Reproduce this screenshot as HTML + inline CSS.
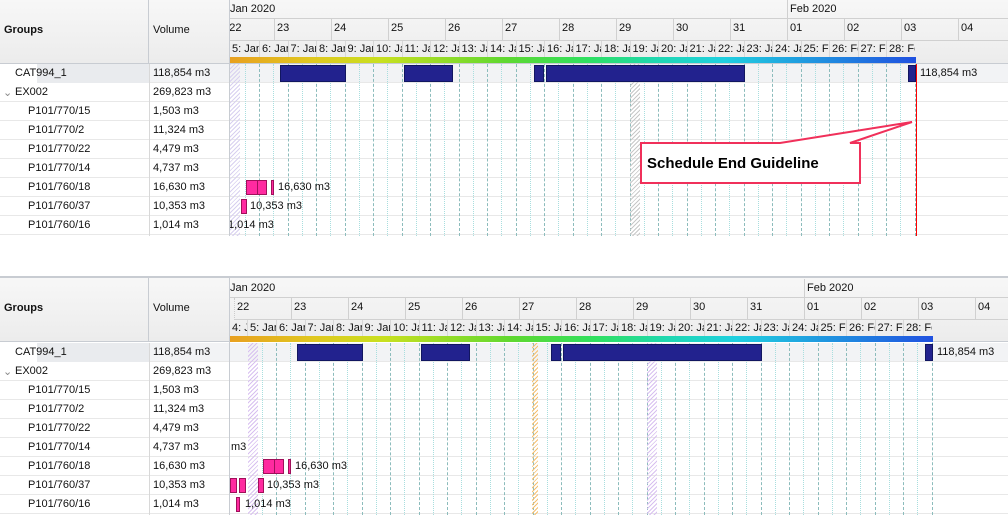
<!DOCTYPE html>
<html><head><meta charset="utf-8"><style>
*{margin:0;padding:0;box-sizing:border-box}
body{width:1008px;height:515px;background:#fff;font-family:"Liberation Sans",Tahoma,sans-serif;font-size:11px;color:#111;position:relative;overflow:hidden}
.p{position:absolute;left:0;width:1008px;height:236px;overflow:hidden}
.hdr{position:absolute;left:0;top:0;width:1008px;height:64px;background:linear-gradient(#f7f7f7,#ececec);border-bottom:1px solid #c8ccd2}
.a{position:absolute;white-space:nowrap}
.gh{position:absolute;left:0;top:0;width:149px;height:64px;border-right:1px solid #c8ccd2;font-weight:bold;padding:24px 0 0 4px}
.vh{position:absolute;left:149px;top:0;width:81px;height:64px;border-right:1px solid #c8ccd2;padding:24px 0 0 4px}
.chart{position:absolute;left:230px;top:0;width:778px;height:236px;overflow:hidden}
.mr{position:absolute;left:0;top:0;height:19px;border-bottom:1px solid #d0d0d0;width:778px}
.d{position:absolute;top:19px;height:22px;border-left:1px solid #d0d0d0;border-bottom:1px solid #d0d0d0;padding:3px 0 0 2px;width:57px}
.s{position:absolute;top:41px;height:16px;border-left:1px solid #d8d8d8;padding:2px 0 0 2px;width:28.5px;overflow:hidden;white-space:nowrap}
.cb{position:absolute;top:57px;height:6px}
.row{position:absolute;left:0;width:1008px;height:19px;border-bottom:1px solid #e8e8e8}
.row span{position:absolute;top:3px;white-space:nowrap}
.bar{position:absolute;height:17px;background:#22228e;border:1px solid #111660}
.pk{position:absolute;height:15px;background:#ff2aa0;border:1px solid #a0105a}
.lbl{position:absolute;white-space:nowrap}
.vl{position:absolute;top:64px;width:0;height:172px;border-left:1px dashed #8fc9c9}
.hl{position:absolute;top:64px;width:10px;height:172px}
</style></head><body>

<!-- TOP PANEL -->
<div class="p" style="top:0">
 <div class="hdr"></div>
 <div class="gh">Groups</div><div class="vh">Volume</div>
 <div class="row" style="top:64px;background:#f2f3f5"><div style="position:absolute;left:0;top:0;width:37px;height:19px;background:#fff"></div><div style="position:absolute;left:37px;top:0;width:112px;height:19px;background:#e9ebee"></div><span style="left:15px">CAT994_1</span><span style="left:153px">118,854 m3</span></div>
 <div class="row" style="top:83px"><span style="left:3px;color:#888">⌄</span><span style="left:15px">EX002</span><span style="left:153px">269,823 m3</span></div>
 <div class="row" style="top:102px"><span style="left:28px">P101/770/15</span><span style="left:153px">1,503 m3</span></div>
 <div class="row" style="top:121px"><span style="left:28px">P101/770/2</span><span style="left:153px">11,324 m3</span></div>
 <div class="row" style="top:140px"><span style="left:28px">P101/770/22</span><span style="left:153px">4,479 m3</span></div>
 <div class="row" style="top:159px"><span style="left:28px">P101/770/14</span><span style="left:153px">4,737 m3</span></div>
 <div class="row" style="top:178px"><span style="left:28px">P101/760/18</span><span style="left:153px">16,630 m3</span></div>
 <div class="row" style="top:197px"><span style="left:28px">P101/760/37</span><span style="left:153px">10,353 m3</span></div>
 <div class="row" style="top:216px"><span style="left:28px">P101/760/16</span><span style="left:153px">1,014 m3</span></div>
 <div style="position:absolute;left:149px;top:64px;width:1px;height:172px;background:#d8d8d8"></div>
 <div style="position:absolute;left:229px;top:0;width:1px;height:236px;background:#c8ccd2"></div>
 <div class="chart" id="c1">
  <div class="mr"><span class="a" style="left:0;top:3px">Jan 2020</span><span class="a" style="left:557px;top:3px;border-left:1px solid #d0d0d0;padding-left:2px;height:19px;top:0;padding-top:3px">Feb 2020</span></div>
  <div class="d" style="left:-13px;border-left:0;padding-left:0">&nbsp;&nbsp;&nbsp;&nbsp;22</div>
  <div class="d" style="left:44px">23</div><div class="d" style="left:101px">24</div><div class="d" style="left:158px">25</div><div class="d" style="left:215px">26</div><div class="d" style="left:272px">27</div><div class="d" style="left:329px">28</div><div class="d" style="left:386px">29</div><div class="d" style="left:443px">30</div><div class="d" style="left:500px">31</div><div class="d" style="left:557px">01</div><div class="d" style="left:614px">02</div><div class="d" style="left:671px">03</div><div class="d" style="left:728px">04</div>
  <div class="s" style="left:0;border-left:0">5: Jan</div><div class="s" style="left:29px">6: Jan</div><div class="s" style="left:57.5px">7: Jan</div><div class="s" style="left:86px">8: Jan</div><div class="s" style="left:114.5px">9: Jan</div><div class="s" style="left:143px">10: Jan</div><div class="s" style="left:171.5px">11: Jan</div><div class="s" style="left:200px">12: Jan</div><div class="s" style="left:228.5px">13: Jan</div><div class="s" style="left:257px">14: Jan</div><div class="s" style="left:285.5px">15: Jan</div><div class="s" style="left:314px">16: Jan</div><div class="s" style="left:342.5px">17: Jan</div><div class="s" style="left:371px">18: Jan</div><div class="s" style="left:399.5px">19: Jan</div><div class="s" style="left:428px">20: Jan</div><div class="s" style="left:456.5px">21: Jan</div><div class="s" style="left:485px">22: Jan</div><div class="s" style="left:513.5px">23: Jan</div><div class="s" style="left:542px">24: Jan</div><div class="s" style="left:570.5px">25: Feb</div><div class="s" style="left:599px">26: Feb</div><div class="s" style="left:627.5px">27: Feb</div><div class="s" style="left:656px">28: Feb</div>
  <div class="cb" style="left:0;width:686px;background:linear-gradient(90deg,#e8a020,#e0c820 12%,#c8e020 22%,#60d830 40%,#30e060 52%,#20d8b0 62%,#20d0e0 72%,#2090e0 86%,#2050e0)"></div>
  <div class="lines"></div>
  <div class="hl" style="left:0;background:repeating-linear-gradient(135deg,#d8d0f0 0 1px,transparent 1px 3px)"></div>
  <div class="hl" style="left:400px;background:repeating-linear-gradient(135deg,#c8c8c8 0 1px,transparent 1px 3px)"></div>
  <div class="bar" style="left:50px;top:65px;width:66px"></div>
  <div class="bar" style="left:174px;top:65px;width:49px"></div>
  <div class="bar" style="left:304px;top:65px;width:10px"></div>
  <div class="bar" style="left:316px;top:65px;width:199px"></div>
  <div class="bar" style="left:678px;top:65px;width:8px"></div>
  <div class="lbl" style="left:690px;top:67px">118,854 m3</div>
  <div style="position:absolute;left:686px;top:64px;width:1px;height:172px;background:#f00"></div>
  <div class="pk" style="left:16px;top:180px;width:12px"></div><div class="pk" style="left:27px;top:180px;width:10px"></div><div class="pk" style="left:41px;top:180px;width:3px"></div>
  <div class="lbl" style="left:48px;top:181px">16,630 m3</div>
  <div class="pk" style="left:11px;top:199px;width:6px"></div>
  <div class="lbl" style="left:20px;top:200px">10,353 m3</div>
  <div class="lbl" style="left:-2px;top:219px">1,014 m3</div>
 </div>
 <svg style="position:absolute;left:0;top:0" width="1008" height="236"><polygon points="641,143 780,143 912,122 850,143 860,143 860,183 641,183" fill="#fff" stroke="#f0305a" stroke-width="2"/><text x="647" y="168" font-family="Liberation Sans,sans-serif" font-weight="bold" font-size="15" fill="#000">Schedule End Guideline</text></svg>
</div>

<div style="position:absolute;left:0;top:276px;width:1008px;height:2px;background:#c8ccd2"></div>

<!-- BOTTOM PANEL -->
<div class="p" style="top:278px;height:237px">
 <div class="hdr"></div>
 <div class="gh">Groups</div><div class="vh">Volume</div>
 <div class="row" style="top:65px;background:#f2f3f5"><div style="position:absolute;left:0;top:0;width:37px;height:19px;background:#fff"></div><div style="position:absolute;left:37px;top:0;width:112px;height:19px;background:#e9ebee"></div><span style="left:15px">CAT994_1</span><span style="left:153px">118,854 m3</span></div>
 <div class="row" style="top:84px"><span style="left:3px;color:#888">⌄</span><span style="left:15px">EX002</span><span style="left:153px">269,823 m3</span></div>
 <div class="row" style="top:103px"><span style="left:28px">P101/770/15</span><span style="left:153px">1,503 m3</span></div>
 <div class="row" style="top:122px"><span style="left:28px">P101/770/2</span><span style="left:153px">11,324 m3</span></div>
 <div class="row" style="top:141px"><span style="left:28px">P101/770/22</span><span style="left:153px">4,479 m3</span></div>
 <div class="row" style="top:160px"><span style="left:28px">P101/770/14</span><span style="left:153px">4,737 m3</span></div>
 <div class="row" style="top:179px"><span style="left:28px">P101/760/18</span><span style="left:153px">16,630 m3</span></div>
 <div class="row" style="top:198px"><span style="left:28px">P101/760/37</span><span style="left:153px">10,353 m3</span></div>
 <div class="row" style="top:217px"><span style="left:28px">P101/760/16</span><span style="left:153px">1,014 m3</span></div>
 <div style="position:absolute;left:149px;top:65px;width:1px;height:172px;background:#d8d8d8"></div>
 <div style="position:absolute;left:229px;top:0;width:1px;height:237px;background:#c8ccd2"></div>
 <div class="chart" id="c2" style="top:1px">
  <div class="mr"><span class="a" style="left:0;top:3px">Jan 2020</span><span class="a" style="left:574px;top:0;border-left:1px solid #d0d0d0;padding-left:2px;height:19px;padding-top:3px">Feb 2020</span></div>
  <div class="d" style="left:4px;border-left:1px dotted #ccc">22</div>
  <div class="d" style="left:61px">23</div><div class="d" style="left:118px">24</div><div class="d" style="left:175px">25</div><div class="d" style="left:232px">26</div><div class="d" style="left:289px">27</div><div class="d" style="left:346px">28</div><div class="d" style="left:403px">29</div><div class="d" style="left:460px">30</div><div class="d" style="left:517px">31</div><div class="d" style="left:574px">01</div><div class="d" style="left:631px">02</div><div class="d" style="left:688px">03</div><div class="d" style="left:745px">04</div>
  <div class="s" style="left:0;border-left:0;width:17px">4: Jan</div><div class="s" style="left:17px">5: Jan</div><div class="s" style="left:46px">6: Jan</div><div class="s" style="left:74.5px">7: Jan</div><div class="s" style="left:103px">8: Jan</div><div class="s" style="left:131.5px">9: Jan</div><div class="s" style="left:160px">10: Jan</div><div class="s" style="left:188.5px">11: Jan</div><div class="s" style="left:217px">12: Jan</div><div class="s" style="left:245.5px">13: Jan</div><div class="s" style="left:274px">14: Jan</div><div class="s" style="left:302.5px">15: Jan</div><div class="s" style="left:331px">16: Jan</div><div class="s" style="left:359.5px">17: Jan</div><div class="s" style="left:388px">18: Jan</div><div class="s" style="left:416.5px">19: Jan</div><div class="s" style="left:445px">20: Jan</div><div class="s" style="left:473.5px">21: Jan</div><div class="s" style="left:502px">22: Jan</div><div class="s" style="left:530.5px">23: Jan</div><div class="s" style="left:559px">24: Jan</div><div class="s" style="left:587.5px">25: Feb</div><div class="s" style="left:616px">26: Feb</div><div class="s" style="left:644.5px">27: Feb</div><div class="s" style="left:673px">28: Feb</div>
  <div class="cb" style="left:0;width:703px;background:linear-gradient(90deg,#e8a020,#e0c820 12%,#c8e020 22%,#60d830 40%,#30e060 52%,#20d8b0 62%,#20d0e0 72%,#2090e0 86%,#2050e0)"></div>
  <div class="lines"></div>
  <div class="hl" style="left:18px;background:repeating-linear-gradient(135deg,#d8c0f0 0 1px,transparent 1px 3px)"></div>
  <div class="hl" style="left:302px;width:6px;background:repeating-linear-gradient(135deg,#f5c070 0 1px,transparent 1px 3px)"></div>
  <div class="hl" style="left:417px;background:repeating-linear-gradient(135deg,#d8c0f0 0 1px,transparent 1px 3px)"></div>
  <div class="bar" style="left:67px;top:65px;width:66px"></div>
  <div class="bar" style="left:191px;top:65px;width:49px"></div>
  <div class="bar" style="left:321px;top:65px;width:10px"></div>
  <div class="bar" style="left:333px;top:65px;width:199px"></div>
  <div class="bar" style="left:695px;top:65px;width:8px"></div>
  <div class="lbl" style="left:707px;top:67px">118,854 m3</div>
  <div class="lbl" style="left:1px;top:162px">m3</div>
  <div class="pk" style="left:33px;top:180px;width:12px"></div><div class="pk" style="left:44px;top:180px;width:10px"></div><div class="pk" style="left:58px;top:180px;width:3px"></div>
  <div class="lbl" style="left:65px;top:181px">16,630 m3</div>
  <div class="pk" style="left:0;top:199px;width:7px"></div><div class="pk" style="left:9px;top:199px;width:7px"></div><div class="pk" style="left:28px;top:199px;width:6px"></div>
  <div class="lbl" style="left:37px;top:200px">10,353 m3</div>
  <div class="pk" style="left:6px;top:218px;width:4px"></div>
  <div class="lbl" style="left:15px;top:219px">1,014 m3</div>
 </div>
</div>
<script>
[['c1',0,686],['c2',17,703]].forEach(function(c){
 var el=document.querySelector('#'+c[0]+' .lines'),h='';
 for(var k=-1;k<60;k++){var x=c[1]+29+28.5*k/2; if(x<0||x>c[2])continue;
  var major=(k%2===0);
  h+='<div class="vl" style="left:'+x.toFixed(1)+'px;border-left:1px '+(major?'dashed #8cbcbc':'dotted #a8dede')+'"></div>';}
 el.innerHTML=h;
});
</script>
</body></html>
